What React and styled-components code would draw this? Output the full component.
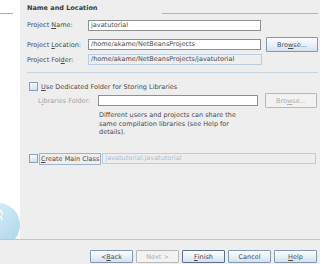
import React from "react";
import styled, { createGlobalStyle } from "styled-components";

const Global = createGlobalStyle`
  html, body { margin: 0; padding: 0; background: #eeeeee; }
  body { font-family: "DejaVu Sans", "Liberation Sans", sans-serif; font-size: 6.5px; color: #4a4a4a; }
  * { box-sizing: border-box; }
`;

const Frame = styled.div`
  width: 320px;
  height: 264px;
  display: flex;
  flex-direction: column;
  overflow: hidden;
  background: #eeeeee;
`;

const Top = styled.div`
  height: 239px;
  display: flex;
`;

const Side = styled.div`
  width: 20px;
  background: #ffffff;
  display: flex;
  flex-direction: column;
`;

const SideRule = styled.div`
  margin-top: 13px;
  width: 13px;
  height: 1px;
  background: #a8a8a8;
`;

const SideArt = styled.svg`
  margin-top: auto;
  display: block;
`;

const Main = styled.div`
  flex: 1;
  display: flex;
  flex-direction: column;
  padding: 0 4px 0 7px;
`;

const HeadRow = styled.div`
  height: 14px;
  display: flex;
  align-items: flex-start;
`;

const Heading = styled.div`
  font-weight: bold;
  color: #3a3a3a;
  line-height: 7px;
  margin-top: 5px;
  white-space: nowrap;
`;

const HeadLine = styled.div`
  margin-left: auto;
  margin-top: 13px;
  width: 156px;
  height: 1px;
  background: #b4b4b4;
`;

const Row = styled.div`
  display: flex;
  align-items: center;
  height: ${(p) => p.$h || 12}px;
  margin-top: ${(p) => p.$mt || 0}px;
`;

const Label = styled.div`
  width: ${(p) => p.$w || 61}px;
  padding-left: ${(p) => p.$pl || 0}px;
  white-space: nowrap;
  line-height: 8px;
  color: ${(p) => (p.$disabled ? "#a4a4a4" : "#4a4a4a")};
`;

const Field = styled.div`
  width: ${(p) => p.$w}px;
  height: ${(p) => p.$h || 11}px;
  margin-left: ${(p) => p.$ml || 0}px;
  border: 1px solid ${(p) => (p.$soft ? "#b9cde3" : "#8e8e8e")};
  background: ${(p) => (p.$soft ? "#eeeeee" : "#ffffff")};
  color: ${(p) => (p.$faint ? "#a9bdd4" : "#4a4a4a")};
  padding-left: 2px;
  line-height: 9px;
  white-space: nowrap;
  overflow: hidden;
`;

const Button = styled.div`
  width: ${(p) => p.$w || 43}px;
  height: ${(p) => p.$h || 13}px;
  margin-left: ${(p) => p.$ml || 0}px;
  border: 1px solid ${(p) => (p.$disabled ? "#b8b8b8" : p.$focus ? "#5d7290" : "#8299b6")};
  border-radius: 1px;
  background: ${(p) =>
    p.$disabled ? "#f2f2f2" : "linear-gradient(#fbfcfe, #e9eff7 55%, #d4e0ee)"};
  color: ${(p) => (p.$disabled ? "#acacac" : "#4a4a4a")};
  display: flex;
  align-items: center;
  justify-content: center;
  white-space: nowrap;
  line-height: 8px;
`;

const U = styled.span`
  text-decoration: underline;
  text-underline-offset: 1px;
`;

const Rule = styled.div`
  margin-top: ${(p) => p.$mt}px;
  height: 1px;
  background: #c6d4e4;
`;

const Check = styled.div`
  width: 9px;
  height: 9px;
  margin-left: 2px;
  margin-right: 1px;
  border: 1px solid #8c9fb8;
  background: linear-gradient(#f7f9fc, #d6e0ec);
  flex: none;
`;

const CheckText = styled.div`
  white-space: nowrap;
  line-height: 8px;
  padding: 1px 1px;
  border: 1px solid ${(p) => (p.$focus ? "#9fb3cc" : "transparent")};
`;

const Note = styled.div`
  margin-top: ${(p) => p.$mt}px;
  padding-left: 72px;
  line-height: 8.5px;
`;

const BottomRule = styled.div`
  height: 1px;
  background: #c4c4c4;
`;

const Bottom = styled.div`
  flex: 1;
  display: flex;
  justify-content: flex-end;
  align-items: flex-start;
  padding: 10px 3px 0 0;
  gap: 3px;
`;

export default function App() {
  return (
    <Frame>
      <Global />
      <Top>
        <Side>
          <SideRule />
          <SideArt width="20" height="40" viewBox="0 0 20 40">
            <defs>
              <linearGradient id="sph" x1="0" y1="0" x2="1" y2="1">
                <stop offset="0" stopColor="#e2f1f8" />
                <stop offset="1" stopColor="#a9d5ea" />
              </linearGradient>
            </defs>
            <circle cx="-2" cy="26" r="22" fill="url(#sph)" />
            <path d="M0 11 Q3 13 2 16" stroke="#ffffff" strokeWidth="1.2" fill="none" />
            <path d="M0 17 Q3 19 1 21" stroke="#ffffff" strokeWidth="1.2" fill="none" />
          </SideArt>
        </Side>
        <Main>
          <HeadRow>
            <Heading>Name and Location</Heading>
            <HeadLine />
          </HeadRow>
          <Row $mt={5} $h={12}>
            <Label>
              Project <U>N</U>ame:
            </Label>
            <Field $w={173} $h={11}>javatutorial</Field>
          </Row>
          <Row $mt={6} $h={15}>
            <Label>
              Project <U>L</U>ocation:
            </Label>
            <Field $w={173} $h={11}>/home/akame/NetBeansProjects</Field>
            <Button $w={52} $h={15} $ml={5}>
              Bro<U>w</U>se...
            </Button>
          </Row>
          <Row $mt={2} $h={11}>
            <Label>
              Project Fol<U>d</U>er:
            </Label>
            <Field $w={174} $h={11} $soft>
              /home/akame/NetBeansProjects/javatutorial
            </Field>
          </Row>
          <Rule $mt={7} />
          <Row $mt={8} $h={11}>
            <Check />
            <CheckText>
              <U>U</U>se Dedicated Folder for Storing Libraries
            </CheckText>
          </Row>
          <Row $mt={1} $h={15}>
            <Label $w={71} $pl={11} $disabled>
              L<U>i</U>braries Folder:
            </Label>
            <Field $w={160} $h={11}></Field>
            <Button $w={52} $h={15} $ml={7} $disabled>
              Bro<U>w</U>se...
            </Button>
          </Row>
          <Note $mt={3}>
            Different users and projects can share the
            <br />
            same compilation libraries (see Help for
            <br />
            details).
          </Note>
          <Row $mt={16} $h={12}>
            <Check />
            <CheckText $focus>
              <U>C</U>reate Main Class
            </CheckText>
            <Field $w={214} $h={11} $ml={1} $soft $faint>
              javatutorial.javatutorial
            </Field>
          </Row>
        </Main>
      </Top>
      <BottomRule />
      <Bottom>
        <Button>
          &lt; <U>B</U>ack
        </Button>
        <Button $disabled>Next &gt;</Button>
        <Button $focus>
          <U>F</U>inish
        </Button>
        <Button>Cancel</Button>
        <Button>
          <U>H</U>elp
        </Button>
      </Bottom>
    </Frame>
  );
}
